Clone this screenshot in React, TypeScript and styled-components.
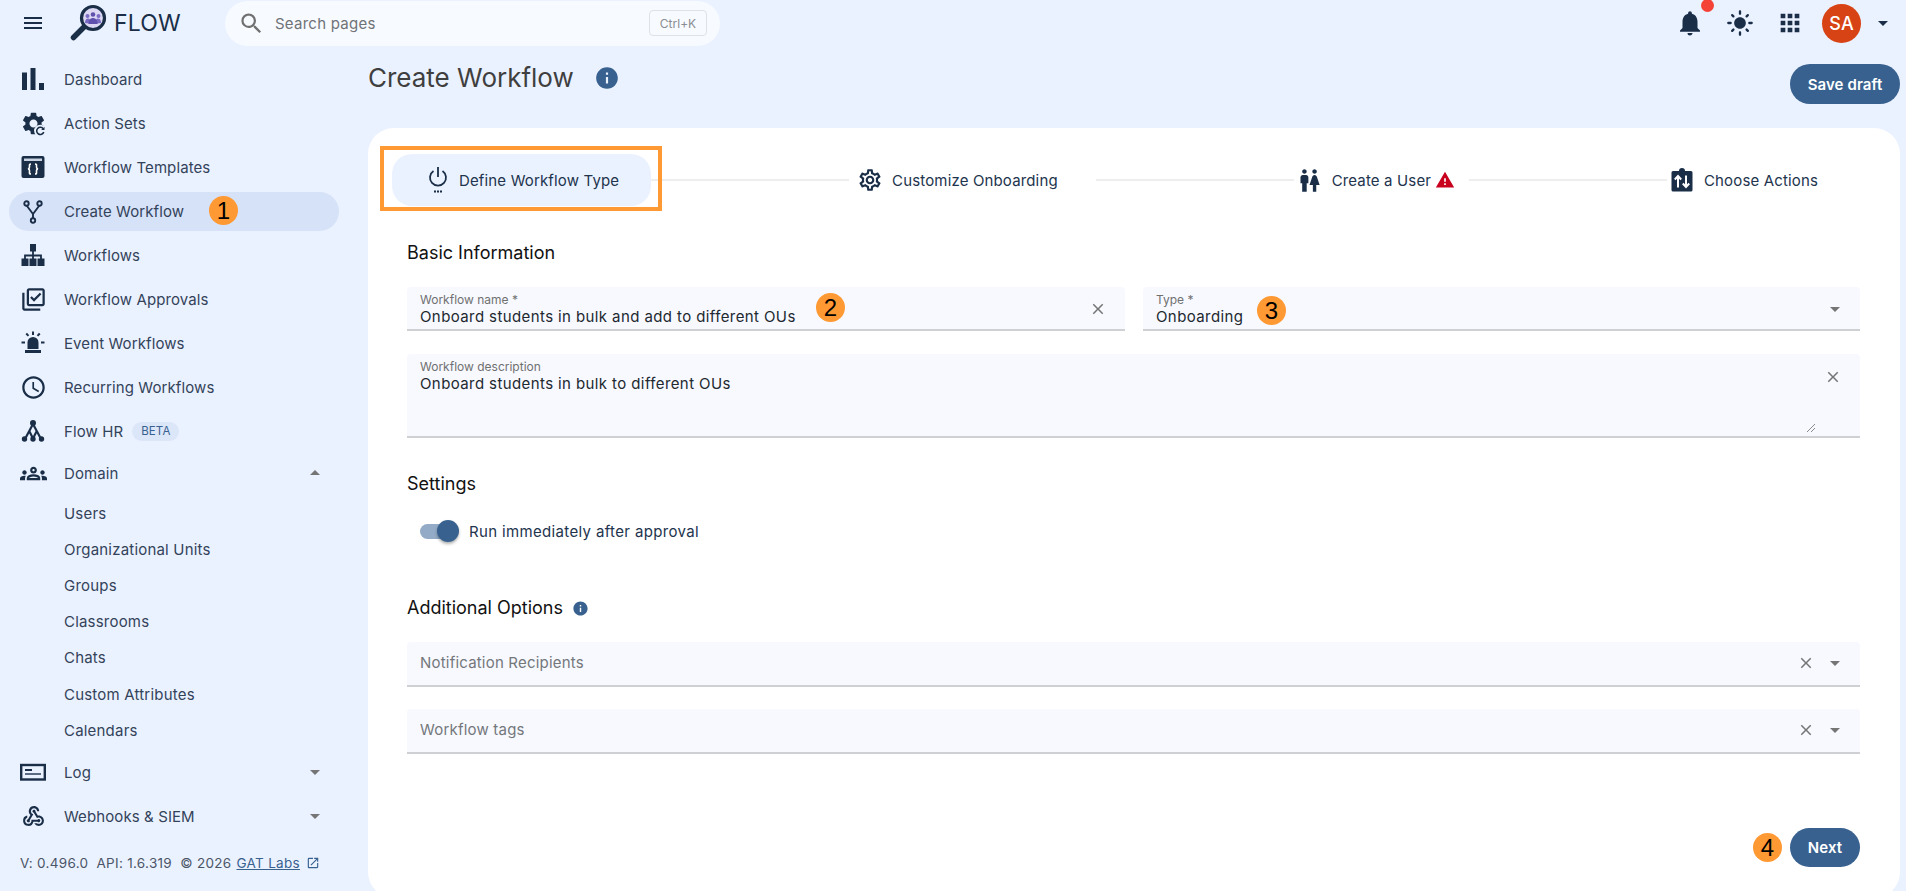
import React from 'react';
import styled, { createGlobalStyle } from 'styled-components';
import {
  MdMenu, MdSearch, MdNotifications, MdLightMode, MdApps, MdOutlineLibraryAddCheck,
  MdAccessTime, MdOutlineGroups, MdWebhook, MdArrowDropDown, MdArrowDropUp, MdOpenInNew, MdInfo,
  MdOutlineSettings, MdWc, MdWarning, MdClose,
} from 'react-icons/md';

const NAVY = '#1a2e48';
const BLUE = '#38618f';
const PAGE = '#ebf2ff';

const GlobalStyle = createGlobalStyle`
    html, body {
        margin: 0;
        padding: 0;
        background: ${PAGE};
        font-family: "Inter", "Liberation Sans", sans-serif;
        overflow: hidden;
    }
`;

const Shell = styled.div`
    width: 1906px;
    height: 891px;
    overflow: hidden;
    display: flex;
    flex-direction: column;
    background: ${PAGE};
`;

// Top app bar
const TopBar = styled.header`
    height: 46px;
    flex: none;
    display: flex;
    align-items: center;
    padding-left: 21px;
    color: ${NAVY};
`;

const Brand = styled.div`
    display: flex;
    align-items: center;
    margin-left: 24px;
    width: 156px;
    flex: none;
`;

const BrandName = styled.span`
    font-size: 23px;
    font-weight: 400;
    letter-spacing: 0.2px;
    margin-left: 7px;
    color: ${NAVY};
`;

const SearchBar = styled.div`
    width: 495px;
    height: 45px;
    flex: none;
    box-sizing: border-box;
    display: flex;
    align-items: center;
    padding: 0 13px 0 13px;
    background: #f7faff;
    border-radius: 23px;
    color: #707070;
`;

const SearchText = styled.span`
    flex: 1;
    margin-left: 10px;
    font-size: 15px;
    letter-spacing: 0.25px;
    color: #6f7378;
`;

const Kbd = styled.span`
    width: 58px;
    height: 26px;
    box-sizing: border-box;
    border: 1px solid #dfe1e4;
    border-radius: 4px;
    display: flex;
    align-items: center;
    justify-content: center;
    font-size: 12px;
    color: #8a8d91;
`;

const TopActions = styled.div`
    margin-left: auto;
    display: flex;
    align-items: center;
    padding-right: 11px;
`;

const BellWrap = styled.span`
    position: relative;
    display: flex;
`;

const RedDot = styled.span`
    position: absolute;
    top: -9px;
    left: 26px;
    width: 13px;
    height: 13px;
    border-radius: 50%;
    background: #f44336;
`;

const TopIcon = styled.span<{ $ml: number }>`
    display: flex;
    margin-left: ${p => p.$ml}px;
`;

const Avatar = styled.div`
    width: 39px;
    height: 39px;
    margin-left: 18px;
    border-radius: 50%;
    background: #d84315;
    color: #fff;
    font-size: 18px;
    font-weight: 500;
    display: flex;
    align-items: center;
    justify-content: center;
`;

const Body = styled.div`
    flex: 1;
    display: flex;
    min-height: 0;
`;

// Left navigation
const Sidebar = styled.nav`
    width: 368px;
    flex: none;
    padding: 11px 29px 0 9px;
    box-sizing: border-box;
    display: flex;
    flex-direction: column;
`;

const NavRow = styled.div<{ $active?: boolean; $h?: number; $mt?: number }>`
    height: ${p => p.$h ?? 44}px;
    margin-top: ${p => p.$mt ?? 0}px;
    flex: none;
    position: relative;
    display: flex;
    align-items: center;
    padding: 0 12px;
    box-sizing: border-box;
    color: #33435a;
    font-size: 15px;
    letter-spacing: 0.1px;
    ${p => p.$active && `
        background: #d6e2f8;
        height: 39px;
        margin: 3px 0 2px;
        border-radius: 20px;
    `}
`;

const NavIcon = styled.span`
    width: 24px;
    height: 24px;
    flex: none;
    margin-right: 19px;
    display: flex;
    align-items: center;
    justify-content: center;
    color: ${NAVY};
    svg { flex: none; }
`;

const NavCaret = styled.span`
    margin-left: auto;
    display: flex;
    color: #757575;
`;

const SubRow = styled.div<{ $mt?: number }>`
    height: 36.2px;
    margin-top: ${p => p.$mt ?? 0}px;
    flex: none;
    display: flex;
    align-items: center;
    padding-left: 55px;
    color: #33435a;
    font-size: 15px;
    letter-spacing: 0.2px;
`;

const BetaTag = styled.span`
    margin-left: 9px;
    height: 19px;
    padding: 0 9px;
    border-radius: 10px;
    background: #dbe6f8;
    color: #38618f;
    font-size: 11.5px;
    display: flex;
    align-items: center;
`;

const Footer = styled.div`
    margin: 14px 0 0 11px;
    height: 22px;
    display: flex;
    align-items: center;
    font-size: 13.5px;
    letter-spacing: 0.3px;
    color: #4a5568;
    white-space: pre;
`;

const FooterLink = styled.a`
    color: #38618f;
    text-decoration: underline;
    margin-left: 5px;
    margin-right: 6px;
`;

// Orange tutorial markers sit on top of the real UI
const Marker = styled.span<{ $left?: number; $top?: number; $right?: number }>`
    position: absolute;
    ${p => p.$left !== undefined && `left: ${p.$left}px;`}
    ${p => p.$right !== undefined && `right: ${p.$right}px;`}
    top: ${p => p.$top ?? 0}px;
    width: 29px;
    height: 29px;
    border-radius: 50%;
    background: #ff9933;
    color: #000;
    font-family: "Liberation Sans", sans-serif;
    font-size: 24px;
    letter-spacing: 0;
    line-height: 29px;
    text-align: center;
`;

const Main = styled.main`
    flex: 1;
    display: flex;
    flex-direction: column;
    margin-right: 6px;
    min-width: 0;
`;

const TitleRow = styled.div`
    height: 82px;
    flex: none;
    box-sizing: border-box;
    padding-top: 18px;
    display: flex;
    align-items: flex-start;
`;

const Title = styled.h1`
    margin: 0;
    font-size: 26px;
    line-height: 28px;
    font-weight: 400;
    color: #3f3f3f;
`;

const TitleInfo = styled.span`
    display: flex;
    margin: 1px 0 0 20px;
    color: ${BLUE};
`;

const PillButton = styled.button<{ $w: number; $h: number }>`
    width: ${p => p.$w}px;
    height: ${p => p.$h}px;
    border: 0;
    border-radius: 20px;
    background: ${BLUE};
    color: #fff;
    font-family: inherit;
    font-size: 15px;
    font-weight: 600;
    letter-spacing: 0.1px;
    padding: 0;
`;

const SaveDraft = styled(PillButton)`
    margin: 0 0 0 auto;
`;

const Card = styled.section`
    height: 770px;
    flex: none;
    box-sizing: border-box;
    background: #fff;
    border-radius: 26px;
    padding: 26px 40px 0 39px;
    display: flex;
    flex-direction: column;
`;

const Stepper = styled.div`
    display: flex;
    align-items: center;
    margin-left: -15px;
    height: 52px;
    flex: none;
`;

const Step = styled.div<{ $pl: number; $pr: number; $active?: boolean }>`
    position: relative;
    height: 52px;
    flex: none;
    display: flex;
    align-items: center;
    box-sizing: border-box;
    padding: 0 ${p => p.$pr}px 0 ${p => p.$pl}px;
    font-size: 15px;
    letter-spacing: 0.15px;
    color: #22344d;
    ${p => p.$active && `
        background: ${PAGE};
        border-radius: 20px;
    `}
`;

const StepIcon = styled.span<{ $mr: number }>`
    display: flex;
    margin-right: ${p => p.$mr}px;
    color: ${NAVY};
`;

const WarnIcon = styled.span`
    display: flex;
    margin-left: 4px;
    color: #c8001e;
`;

const StepLine = styled.div`
    flex: 1;
    height: 2px;
    background: #eeeeee;
`;

const Highlight = styled.div`
    position: absolute;
    left: -12px;
    right: -11px;
    top: -8px;
    bottom: -5px;
    border: 4px solid #ff9933;
    pointer-events: none;
`;

const SectionTitle = styled.h2<{ $mt: number }>`
    margin: ${p => p.$mt}px 0 0;
    height: 20px;
    display: flex;
    align-items: center;
    font-size: 18px;
    line-height: 20px;
    font-weight: 400;
    color: #111;
`;

const SectionInfo = styled.span`
    display: flex;
    margin-left: 9px;
    color: ${BLUE};
`;

const FieldGrid = styled.div`
    margin-top: 24px;
    display: grid;
    grid-template-columns: 718px 717px;
    column-gap: 18px;
`;

const Field = styled.div<{ $h?: number; $mt?: number }>`
    position: relative;
    height: ${p => p.$h ?? 44}px;
    margin-top: ${p => p.$mt ?? 0}px;
    box-sizing: border-box;
    background: #f7f9ff;
    border-bottom: 2px solid #cfd0d3;
    border-radius: 4px 4px 0 0;
    padding: 6px 12px 0 13px;
    display: flex;
    flex: none;
`;

const FieldBody = styled.div`
    flex: 1;
    min-width: 0;
`;

const FieldLabel = styled.div`
    font-size: 12px;
    line-height: 14px;
    color: #707070;
`;

const FieldValue = styled.div`
    font-size: 15px;
    line-height: 20px;
    letter-spacing: 0.4px;
    color: #22282f;
`;

const Placeholder = styled.div`
    font-size: 15px;
    line-height: 30px;
    letter-spacing: 0.2px;
    color: #74777b;
`;

const FieldIcons = styled.div<{ $top?: number; $pr?: number }>`
    display: flex;
    align-items: center;
    color: #757575;
    height: 30px;
    margin-top: ${p => p.$top ?? 0}px;
    padding-right: ${p => p.$pr ?? 0}px;
`;

const ClearGap = styled.span`
    display: flex;
    margin-left: 8px;
`;

const ResizeGrip = styled.svg`
    position: absolute;
    right: 44px;
    bottom: 3px;
`;

const ToggleRow = styled.div`
    margin: 25px 0 0 13px;
    height: 24px;
    display: flex;
    align-items: center;
    font-size: 15px;
    letter-spacing: 0.35px;
    color: #22344d;
`;

const ToggleTrack = styled.span`
    position: relative;
    width: 34px;
    height: 15px;
    border-radius: 8px;
    background: #93abc6;
    margin-right: 15px;
`;

const ToggleKnob = styled.span`
    position: absolute;
    right: -5px;
    top: -4px;
    width: 22px;
    height: 22px;
    border-radius: 50%;
    background: ${BLUE};
    box-shadow: 0 2px 3px rgba(0, 0, 0, 0.3);
`;

const NextRow = styled.div`
    position: relative;
    margin-top: 74px;
    display: flex;
    justify-content: flex-end;
`;

const Logo = () => (
  <svg width="38" height="38" viewBox="0 0 38 38">
    <path d="M15 23L4.500 33.500" stroke={NAVY} strokeWidth="5.500" strokeLinecap="round" />
    <circle cx="24" cy="14" r="11.500" fill="#dcd8f3" stroke={NAVY} strokeWidth="3.200" />
    <circle cx="24" cy="10.500" r="2.300" fill="#5f50ad" />
    <circle cx="18.500" cy="12" r="2" fill="#7a6cc4" />
    <circle cx="29.500" cy="12" r="2" fill="#7a6cc4" />
    <path d="M16 19c0-3 1-4.500 3-4.500s2 1 2 3l-1 2zM32 19c0-3-1-4.500-3-4.500s-2 1-2 3l1 2z" fill="#7a6cc4" />
    <path d="M19.500 20c0-4 2-6 4.500-6s4.500 2 4.500 6z" fill="#5f50ad" />
  </svg>
);

const BarsIcon = () => (
  <svg width="24" height="24" viewBox="0 0 24 24" fill={NAVY}>
    <rect x="1" y="5.500" width="5" height="17.500" />
    <rect x="9.500" y="1" width="5" height="22" />
    <rect x="18" y="16" width="5" height="7" />
  </svg>
);

const ActionSetsIcon = () => (
  <svg width="27" height="27" viewBox="0 0 24 24" fill={NAVY}>
    <path d="M19.140 12.940c.04-.3.06-.61.06-.94 0-.32-.02-.64-.07-.94l2.030-1.580c.18-.14.23-.41.12-.61l-1.920-3.320c-.12-.22-.37-.29-.59-.22l-2.390.96c-.5-.38-1.030-.7-1.620-.94l-.36-2.540c-.04-.24-.24-.41-.48-.41h-3.840c-.24 0-.43.17-.47.41l-.36 2.540c-.59.24-1.130.57-1.620.94l-2.390-.96c-.22-.08-.47 0-.59.22L2.740 8.870c-.12.21-.08.47.12.61l2.030 1.580c-.05.3-.09.63-.09.94s.02.64.07.94l-2.030 1.580c-.18.14-.23.41-.12.61l1.920 3.320c.12.22.37.29.59.22l2.390-.96c.5.38 1.030.7 1.620.94l.36 2.540c.05.24.24.41.48.41h3.840c.24 0 .44-.17.47-.41l.36-2.540c.59-.24 1.130-.56 1.620-.94l2.390.96c.22.08.47 0 .59-.22l1.920-3.320c.12-.22.07-.47-.12-.61l-2.010-1.580zM12 15.600c-1.980 0-3.600-1.620-3.600-3.600s1.620-3.600 3.600-3.600 3.600 1.620 3.600 3.600-1.620 3.600-3.600 3.600z" />
    <circle cx="18" cy="18.500" r="5.500" fill={PAGE} />
    <path d="M20.700 16.800a3.200 3.200 0 1 0 .4 2.700" fill="none" stroke={NAVY} strokeWidth="1.400" />
    <path d="M21.800 14.800v3h-3z" />
  </svg>
);

const TemplatesIcon = () => (
  <svg width="24" height="24" viewBox="0 0 24 24">
    <rect x="0.500" y="1" width="23" height="22" rx="2" fill={NAVY} />
    <rect x="3" y="3.500" width="18" height="2.500" fill="#c9d3e2" />
    <path d="M10 9c-2 0-1.500 1.500-1.500 3S7 14 7 14s1.500 0 1.500 2S8 19 10 19M14 9c2 0 1.500 1.500 1.500 3s1.500 2 1.500 2-1.500 0-1.500 2 .5 3-1.500 3" fill="none" stroke="#fff" strokeWidth="1.600" />
  </svg>
);

const ForkIcon = () => (
  <svg width="24" height="24" viewBox="0 0 24 24" fill="none" stroke={NAVY} strokeWidth="1.900">
    <circle cx="5.500" cy="3.500" r="2.200" />
    <circle cx="18.500" cy="3.500" r="2.200" />
    <circle cx="12" cy="20.500" r="2.200" />
    <path d="M5.800 5.700L12 14l6.200-8.300M12 14v4.300" />
  </svg>
);

const SitemapIcon = () => (
  <svg width="24" height="24" viewBox="0 0 24 24" fill={NAVY}>
    <rect x="9" y="1" width="6" height="7.500" />
    <rect x="0.500" y="15.500" width="7" height="7.500" />
    <rect x="8.500" y="15.500" width="7" height="7.500" />
    <rect x="16.500" y="15.500" width="7" height="7.500" />
    <path d="M12 8v8M4 16v-3.500h16V16" fill="none" stroke={NAVY} strokeWidth="1.800" />
  </svg>
);

const SirenIcon = () => (
  <svg width="24" height="24" viewBox="0 0 24 24" fill={NAVY}>
    <path d="M6.500 18v-6.500a5.500 5.500 0 0 1 11 0V18z" />
    <rect x="4" y="19" width="16" height="3" />
    <rect x="11" y="0.500" width="2" height="3.500" />
    <rect x="0.500" y="10.500" width="3.500" height="2" />
    <rect x="20" y="10.500" width="3.500" height="2" />
    <path d="M4.500 3.200l1.500-1.400 2.200 2.400-1.400 1.400zM19.500 3.200L18 1.800l-2.200 2.400 1.400 1.400z" />
  </svg>
);

const FlowHrIcon = () => (
  <svg width="24" height="24" viewBox="0 0 24 24" fill={NAVY}>
    <circle cx="12" cy="4" r="3" />
    <circle cx="3.500" cy="20" r="2.700" />
    <circle cx="12" cy="20" r="2.700" />
    <circle cx="20.500" cy="20" r="2.700" />
    <path d="M12 5L4 20M12 5l8 15M8.500 12.500l3.500 7 3.500-7" fill="none" stroke={NAVY} strokeWidth="2.200" />
  </svg>
);

const LogIcon = () => (
  <svg width="26" height="24" viewBox="0 0 26 24" fill="none">
    <rect x="1.200" y="5" width="23.600" height="14.500" stroke={NAVY} strokeWidth="2.400" />
    <rect x="5" y="9" width="7" height="2" fill={NAVY} />
    <rect x="5" y="13" width="16" height="2" fill="#5a6b82" />
  </svg>
);

const PowerIcon = () => (
  <svg width="22" height="28" viewBox="0 0 22 28" fill="none" stroke={NAVY} strokeWidth="1.800">
    <path d="M11 1v10M6.500 5a8 8 0 1 0 9 0" />
    <path d="M7 25.500h2M10 25.500h2M13 25.500h2" strokeWidth="2" />
  </svg>
);

const ChooseIcon = () => (
  <svg width="22" height="24" viewBox="0 0 22 24">
    <path d="M2 3h6a3 3 0 0 1 6 0h6a1.500 1.500 0 0 1 1.500 1.500v17.500a1.500 1.500 0 0 1-1.500 1.500H2A1.500 1.500 0 0 1 .500 22V4.500A1.500 1.500 0 0 1 2 3z" fill={NAVY} />
    <path d="M7 19.500V8.500M3.800 11.500L7 8l3.200 3.500M15 7.500v11M11.800 15.500L15 19l3.200-3.500" fill="none" stroke="#fff" strokeWidth="2" />
  </svg>
);

const mainNav: { label: string; icon: React.ReactNode }[] = [
  { label: 'Dashboard', icon: <BarsIcon /> },
  { label: 'Action Sets', icon: <ActionSetsIcon /> },
  { label: 'Workflow Templates', icon: <TemplatesIcon /> },
];

const subNav = ['Organizational Units', 'Groups', 'Classrooms', 'Chats', 'Custom Attributes', 'Calendars'];

export default function App() {
  return (
    <Shell>
      <GlobalStyle />
      <TopBar>
        <MdMenu size={24} />
        <Brand>
          <Logo />
          <BrandName>FLOW</BrandName>
        </Brand>
        <SearchBar>
          <MdSearch size={27} />
          <SearchText>Search pages</SearchText>
          <Kbd>Ctrl+K</Kbd>
        </SearchBar>
        <TopActions>
          <BellWrap>
            <MdNotifications size={30} />
            <RedDot />
          </BellWrap>
          <TopIcon $ml={21}><MdLightMode size={28} /></TopIcon>
          <TopIcon $ml={22}><MdApps size={28} /></TopIcon>
          <Avatar>SA</Avatar>
          <TopIcon $ml={10}><MdArrowDropDown size={24} /></TopIcon>
        </TopActions>
      </TopBar>
      <Body>
        <Sidebar>
          {mainNav.map(n => (
            <NavRow key={n.label}>
              <NavIcon>{n.icon}</NavIcon>
              {n.label}
            </NavRow>
          ))}
          <NavRow $active>
            <NavIcon><ForkIcon /></NavIcon>
            Create Workflow
            <Marker $left={200} $top={4}>1</Marker>
          </NavRow>
          <NavRow><NavIcon><SitemapIcon /></NavIcon>Workflows</NavRow>
          <NavRow><NavIcon><MdOutlineLibraryAddCheck size={27} /></NavIcon>Workflow Approvals</NavRow>
          <NavRow><NavIcon><SirenIcon /></NavIcon>Event Workflows</NavRow>
          <NavRow><NavIcon><MdAccessTime size={27} /></NavIcon>Recurring Workflows</NavRow>
          <NavRow><NavIcon><FlowHrIcon /></NavIcon>Flow HR<BetaTag>BETA</BetaTag></NavRow>
          <NavRow $h={40}>
            <NavIcon><MdOutlineGroups size={27} /></NavIcon>
            Domain
            <NavCaret><MdArrowDropUp size={24} /></NavCaret>
          </NavRow>
          <SubRow $mt={2}>Users</SubRow>
          {subNav.map(s => <SubRow key={s}>{s}</SubRow>)}
          <NavRow $mt={2}>
            <NavIcon><LogIcon /></NavIcon>
            Log
            <NavCaret><MdArrowDropDown size={24} /></NavCaret>
          </NavRow>
          <NavRow>
            <NavIcon><MdWebhook size={25} /></NavIcon>
            Webhooks & SIEM
            <NavCaret><MdArrowDropDown size={24} /></NavCaret>
          </NavRow>
          <Footer>
            {'V: 0.496.0  API: 1.6.319  © 2026'}
            <FooterLink>GAT Labs</FooterLink>
            <MdOpenInNew size={14} color="#38618f" />
          </Footer>
        </Sidebar>
        <Main>
          <TitleRow>
            <Title>Create Workflow</Title>
            <TitleInfo><MdInfo size={26} /></TitleInfo>
            <SaveDraft $w={110} $h={40}>Save draft</SaveDraft>
          </TitleRow>
          <Card>
            <Stepper>
              <Step $pl={35} $pr={32} $active>
                <StepIcon $mr={10}><PowerIcon /></StepIcon>
                Define Workflow Type
                <Highlight />
              </Step>
              <StepLine />
              <Step $pl={8} $pr={38}>
                <StepIcon $mr={9}><MdOutlineSettings size={26} /></StepIcon>
                Customize Onboarding
              </Step>
              <StepLine />
              <Step $pl={2} $pr={14}>
                <StepIcon $mr={9}><MdWc size={27} /></StepIcon>
                Create a User
                <WarnIcon><MdWarning size={20} /></WarnIcon>
              </Step>
              <StepLine />
              <Step $pl={4} $pr={42}>
                <StepIcon $mr={11}><ChooseIcon /></StepIcon>
                Choose Actions
              </Step>
            </Stepper>

            <SectionTitle $mt={37}>Basic Information</SectionTitle>
            <FieldGrid>
              <Field>
                <FieldBody>
                  <FieldLabel>Workflow name *</FieldLabel>
                  <FieldValue>Onboard students in bulk and add to different OUs</FieldValue>
                </FieldBody>
                <FieldIcons $top={1} $pr={6}><MdClose size={18} /></FieldIcons>
                <Marker $left={409} $top={6}>2</Marker>
              </Field>
              <Field>
                <FieldBody>
                  <FieldLabel>Type *</FieldLabel>
                  <FieldValue>Onboarding</FieldValue>
                </FieldBody>
                <FieldIcons $top={1} $pr={1}><MdArrowDropDown size={24} /></FieldIcons>
                <Marker $left={114} $top={9}>3</Marker>
              </Field>
            </FieldGrid>
            <Field $h={84} $mt={23}>
              <FieldBody>
                <FieldLabel>Workflow description</FieldLabel>
                <FieldValue>Onboard students in bulk to different OUs</FieldValue>
              </FieldBody>
              <FieldIcons $top={2} $pr={6}><MdClose size={18} /></FieldIcons>
              <ResizeGrip width="10" height="10" viewBox="0 0 10 10">
                <path d="M1 9L9 1M5 9l4-4" stroke="#8a8a8a" strokeWidth="1" />
              </ResizeGrip>
            </Field>

            <SectionTitle $mt={36}>Settings</SectionTitle>
            <ToggleRow>
              <ToggleTrack><ToggleKnob /></ToggleTrack>
              Run immediately after approval
            </ToggleRow>

            <SectionTitle $mt={55}>
              Additional Options
              <SectionInfo><MdInfo size={17} /></SectionInfo>
            </SectionTitle>
            <Field $h={45} $mt={24}>
              <FieldBody><Placeholder>Notification Recipients</Placeholder></FieldBody>
              <FieldIcons $pr={1}><MdClose size={18} /><ClearGap><MdArrowDropDown size={24} /></ClearGap></FieldIcons>
            </Field>
            <Field $h={45} $mt={22}>
              <FieldBody><Placeholder>Workflow tags</Placeholder></FieldBody>
              <FieldIcons $pr={1}><MdClose size={18} /><ClearGap><MdArrowDropDown size={24} /></ClearGap></FieldIcons>
            </Field>

            <NextRow>
              <PillButton $w={70} $h={39}>Next</PillButton>
              <Marker $right={78} $top={5}>4</Marker>
            </NextRow>
          </Card>
        </Main>
      </Body>
    </Shell>
  );
}
